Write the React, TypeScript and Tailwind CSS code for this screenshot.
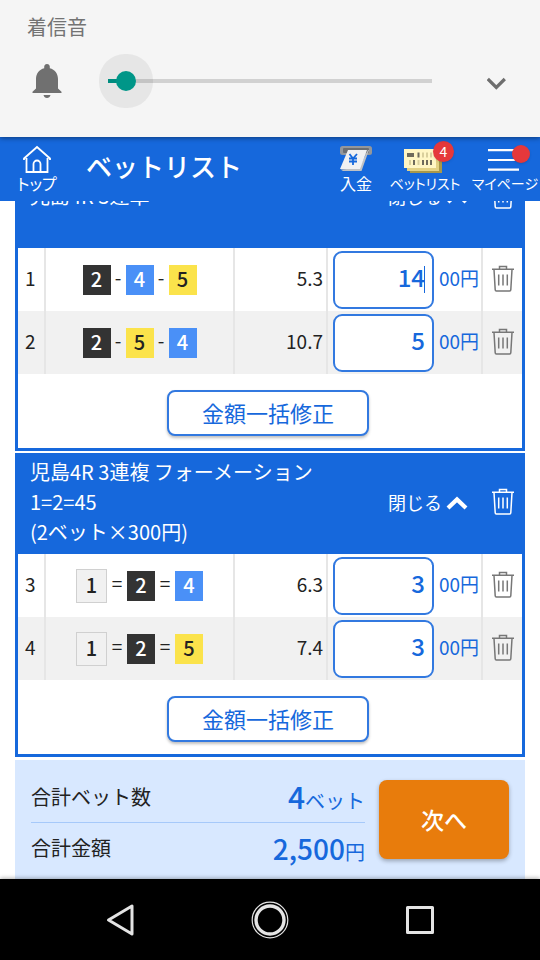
import { useState } from 'react'
import type { ReactNode } from 'react'
import clsx from 'clsx'

type Bet = {
  no: number
  boats: number[]
  sep: '-' | '='
  odds: string
  amount: string
  editing?: boolean
}

const TRIFECTA: Bet[] = [
  { no: 1, boats: [2, 4, 5], sep: '-', odds: '5.3', amount: '14', editing: true },
  { no: 2, boats: [2, 5, 4], sep: '-', odds: '10.7', amount: '5' },
]

const TRIO: Bet[] = [
  { no: 3, boats: [1, 2, 4], sep: '=', odds: '6.3', amount: '3' },
  { no: 4, boats: [1, 2, 5], sep: '=', odds: '7.4', amount: '3' },
]

const BOAT_STYLE: Record<number, string> = {
  1: 'h-[34px] w-[31px] border border-[#d0d0d0] bg-[#f1f1f1] text-[#222]',
  2: 'h-[30px] w-7 bg-[#333] text-white',
  4: 'h-[30px] w-7 bg-[#4a90f7] text-white',
  5: 'h-[30px] w-7 bg-[#fbe34b] text-[#222]',
}

export default function App() {
  return (
    <div className="flex h-screen flex-col overflow-hidden bg-white font-['Noto_Sans_CJK_JP','Noto_Sans',sans-serif] text-[#222]">
      <VolumePanel />
      <Header />
      <main className="min-h-0 flex-1 overflow-hidden px-[15px]">
        <div className="-mt-[54px] flex flex-col gap-0.5">
          <BetCard title={['児島4R 3連単']} bets={TRIFECTA} />
          <BetCard title={['児島4R 3連複 フォーメーション', '1=2=45', '(2ベット×300円)']} bets={TRIO} />
          <Summary />
        </div>
      </main>
      <SystemNav />
    </div>
  )
}

function VolumePanel() {
  const [volume, setVolume] = useState(1)

  return (
    <section className="relative z-20 h-[137px] shrink-0 bg-[#f5f5f5] pt-[13px] shadow-[0_1px_5px_rgba(0,0,0,0.45)]">
      <label htmlFor="ring" className="ml-[27px] block text-[20px] leading-7 text-[#737373]">着信音</label>
      <div className="flex h-20 items-center pr-[33px] pl-8">
        <svg viewBox="0 0 30 34" className="h-[34px] w-[30px] shrink-0" fill="#707070">
          <path d="M15 0c1.700 0 2.800 1.200 2.800 2.800v1.400C22.800 5.500 26 9.600 26 15v9.500l3.500 3.300V29H.5v-1.200L4 24.500V15C4 9.600 7.200 5.500 12.200 4.200V2.800C12.200 1.200 13.300 0 15 0zM11.500 31h7c-.4 1.700-1.800 3-3.500 3s-3.100-1.300-3.500-3z" />
        </svg>
        <input
          id="ring"
          type="range"
          min={0}
          max={40}
          value={volume}
          onChange={e => setVolume(Number(e.target.value))}
          className="mr-[55px] ml-[46px] h-1 min-w-0 flex-1 appearance-none bg-[linear-gradient(to_right,#009688_17px,#d1d1d1_17px)] outline-none [&::-webkit-slider-thumb]:size-5 [&::-webkit-slider-thumb]:appearance-none [&::-webkit-slider-thumb]:rounded-full [&::-webkit-slider-thumb]:bg-[#009688] [&::-webkit-slider-thumb]:shadow-[0_0_0_17px_rgba(0,0,0,0.06)]"
        />
        <button type="button" aria-label="展開" className="shrink-0">
          <svg viewBox="0 0 20 20" className="size-5" fill="none" stroke="#6e6e6e" strokeWidth="3.200">
            <path d="M.8 8l8.500 8.500L17.800 8" />
          </svg>
        </button>
      </div>
    </section>
  )
}

function Header() {
  return (
    <header className="relative z-10 flex h-16 shrink-0 bg-[#1668dc] text-white">
      <HeaderLink label="トップ" className="w-[74px] text-[16px]">
        <svg viewBox="0 0 28 28" className="size-7" fill="none" stroke="#fff" strokeWidth="1.800">
          <path d="M1 15v-1.500L14 2l13 11.500V15M3.500 13v14h21V13M10.500 27v-8a3.500 3.500 0 0 1 7 0v8" />
        </svg>
      </HeaderLink>
      <h1 className="pl-3 text-[26px] leading-[58px] font-medium whitespace-nowrap">ベットリスト</h1>
      <nav className="ml-auto flex">
        <HeaderLink label="入金" className="w-12 text-[16px]">
          <svg viewBox="0 0 34 28" className="h-7 w-[34px]">
            <rect x="1" y="1" width="32" height="9" rx="2.500" fill="#94979b" />
            <rect x="4" y="3" width="26" height="5" rx="1" fill="#6b6e72" />
            <path d="M29 5h1l-7.500 21H4l-2.500-1.500L20 23z" fill="#bfc1c4" />
            <path d="M9 5h19l-7 19H1z" fill="#f1f1f2" />
            <path d="M10.500 9l3.500 4.500L18 9M14 13.500V20M10 13.500h8M10 16.500h8" fill="none" stroke="#1668dc" strokeWidth="1.800" />
          </svg>
        </HeaderLink>
        <HeaderLink label="ベットリスト" className="w-[90px] text-[14px]">
          <svg viewBox="0 0 42 28" className="h-7 w-[42px]">
            <path d="M6 9h32v19H6z" fill="#a8984a" />
            <path d="M3 7h32v19H3z" fill="#e3d285" />
            <path d="M0 4h32v19H0z" fill="#fff6c4" />
            <path d="M3 8h7v4H3zM13.500 7.500h2v5h-2zM9 15h2v5H9zM18 15h2v5h-2zM22 15h2v5h-2zM26 15h2v5h-2z" fill="#6f6b5c" />
            <path d="M18 7.500h2v5h-2zM22 7.500h2v5h-2zM26 7.500h2v5h-2zM5 15h2v5H5zM13.500 15h2v5h-2z" fill="#d9cf9c" />
          </svg>
          <span className="absolute -top-1 -right-2 size-[21px] rounded-full bg-[#e5383b] text-center text-[14px] leading-5 shadow-sm">4</span>
        </HeaderLink>
        <HeaderLink label="マイページ" className="w-[70px] text-[14px]">
          <svg viewBox="0 0 34 28" className="h-7 w-[34px]" stroke="#fff" strokeWidth="2.200">
            <path d="M0 5.200h31M0 15h31M0 24.700h31" />
          </svg>
          <span className="absolute top-0 -right-2 size-[18px] rounded-full bg-[#e5383b] shadow-sm" />
        </HeaderLink>
      </nav>
    </header>
  )
}

function HeaderLink({ label, className, children }: { label: string; className: string; children: ReactNode }) {
  return (
    <a href="#" className={clsx('flex flex-col items-center pt-2', className)}>
      <span className="relative h-7">{children}</span>
      <span className="leading-5 whitespace-nowrap [font-feature-settings:'palt']">{label}</span>
    </a>
  )
}

function BetCard({ title, bets }: { title: string[]; bets: Bet[] }) {
  return (
    <section className="border-3 border-[#1668dc] bg-white">
      <div className="flex h-[98px] items-center bg-[#1668dc] pr-2 pb-[7px] pl-3 text-white">
        <h2 className="flex-1 text-[20px] leading-[30px] whitespace-nowrap">
          {title.map(line => <span key={line} className="block">{line}</span>)}
        </h2>
        <button type="button" className="flex items-center gap-1 text-[18px] leading-[30px] whitespace-nowrap">
          閉じる
          <svg viewBox="0 0 22 16" className="h-4 w-[22px]" fill="none" stroke="#fff" strokeWidth="4.200">
            <path d="M2 14l9-8.500L20 14" />
          </svg>
        </button>
        <button type="button" aria-label="削除" className="ml-6">
          <TrashIcon />
        </button>
      </div>

      <table className="w-full table-fixed border-collapse">
        <colgroup>
          <col className="w-[27px]" />
          <col />
          <col className="w-[93px]" />
          <col className="w-[155px]" />
          <col className="w-10" />
        </colgroup>
        <tbody>
          {bets.map(bet => <BetRow key={bet.no} bet={bet} />)}
        </tbody>
      </table>

      <div className="flex justify-center pt-4 pr-1 pb-3">
        <button type="button" className="h-[46px] w-[202px] rounded-lg border-2 border-[#3279e0] bg-white pb-0.5 text-[22px] text-[#1668dc] shadow-[0_2px_3px_rgba(0,0,0,0.25)]">
          金額一括修正
        </button>
      </div>
    </section>
  )
}

function BetRow({ bet }: { bet: Bet }) {
  const [amount, setAmount] = useState(bet.amount)

  return (
    <tr className="h-[63px] text-[19px] even:bg-[#f1f1f1]">
      <td className="border-r-2 border-[#e6e6e6] p-0 pb-[3px] pl-[7px]">{bet.no}</td>
      <td className="border-r-2 border-[#e6e6e6] p-0">
        <div className="flex items-center justify-center">
          {bet.boats.map((boat, i) => (
            <span key={boat} className="flex items-center">
              {i > 0 && <span className={clsx('pb-1 text-center', bet.sep === '-' ? 'w-[15px]' : 'w-5')}>{bet.sep}</span>}
              <span className={clsx('flex items-center justify-center pb-0.5 text-[20px] leading-none font-medium', BOAT_STYLE[boat])}>{boat}</span>
            </span>
          ))}
        </div>
      </td>
      <td className="border-r-2 border-[#e6e6e6] p-0 pr-[3px] pb-[3px] text-right">{bet.odds}</td>
      <td className="border-r-2 border-[#e6e6e6] p-0 pl-[5px]">
        <div className="flex items-center gap-[5px] text-[#1668dc]">
          <span className="relative">
            <input
              type="text"
              inputMode="numeric"
              aria-label={`${bet.no} 金額`}
              value={amount}
              onChange={e => setAmount(e.target.value)}
              className="block h-[58px] w-[101px] rounded-[9px] border-2 border-[#3279e0] bg-white pr-[7px] pb-1.5 text-right text-[24px] font-medium outline-none"
            />
            {bet.editing && <span className="absolute top-[15px] right-[9px] h-[27px] w-px bg-[#1668dc]" />}
          </span>
          <span className="pb-[3px] whitespace-nowrap">00円</span>
        </div>
      </td>
      <td className="p-0 pb-[5px] text-center text-[#777]">
        <button type="button" aria-label="削除" className="align-middle">
          <TrashIcon />
        </button>
      </td>
    </tr>
  )
}

function TrashIcon() {
  return (
    <svg viewBox="0 0 22 27" className="block h-[27px] w-[22px]" fill="none" stroke="currentColor" strokeWidth="1.500">
      <path d="M0 4.200h22M7.500 4V1.500h7V4M2 4.500l1.200 20.300c0 .7.500 1.200 1.200 1.200h13.200c.7 0 1.200-.5 1.200-1.200L20 4.500M6.700 9.500V20.500M11 9.500V20.500M15.300 9.500V20.500" />
    </svg>
  )
}

function Summary() {
  return (
    <section className="mt-px flex gap-3.5 bg-[#d8e8ff] px-4 pt-5 pb-5">
      <dl className="flex-1 text-[20px] whitespace-nowrap">
        <div className="flex h-[43px] items-center justify-between border-b border-[#a6c9fa] pb-2">
          <dt>合計ベット数</dt>
          <dd className="text-[#1668dc]"><span className="text-[30px] leading-9 font-medium">4</span>ベット</dd>
        </div>
        <div className="flex h-[50px] items-center justify-between">
          <dt>合計金額</dt>
          <dd className="text-[#1668dc]"><span className="text-[28px] leading-9 font-medium">2,500</span>円</dd>
        </div>
      </dl>
      <button type="button" className="h-[79px] w-[130px] rounded-lg bg-[#e87c0c] text-[23px] font-medium text-white shadow-[0_2px_4px_rgba(0,0,0,0.3)]">
        次へ
      </button>
    </section>
  )
}

function SystemNav() {
  return (
    <nav className="relative z-10 grid h-[81px] shrink-0 grid-cols-3 items-center bg-black px-[45px] shadow-[0_-1px_4px_rgba(0,0,0,0.3)]">
      <button type="button" aria-label="戻る" className="flex justify-center">
        <svg viewBox="0 0 40 40" className="size-10" fill="none" stroke="#e4e4e4" strokeWidth="3" strokeLinejoin="round">
          <path d="M32 6v28L8.500 20z" />
        </svg>
      </button>
      <button type="button" aria-label="ホーム" className="flex justify-center">
        <svg viewBox="0 0 40 40" className="size-10" fill="none" stroke="#e4e4e4">
          <circle cx="20" cy="20" r="17.800" strokeWidth="1.200" />
          <circle cx="20" cy="20" r="14" strokeWidth="3.400" />
        </svg>
      </button>
      <button type="button" aria-label="履歴" className="flex justify-center">
        <svg viewBox="0 0 40 40" className="size-10" fill="none" stroke="#e4e4e4" strokeWidth="3" strokeLinejoin="round">
          <rect x="7.500" y="7.500" width="25" height="25" />
        </svg>
      </button>
    </nav>
  )
}
